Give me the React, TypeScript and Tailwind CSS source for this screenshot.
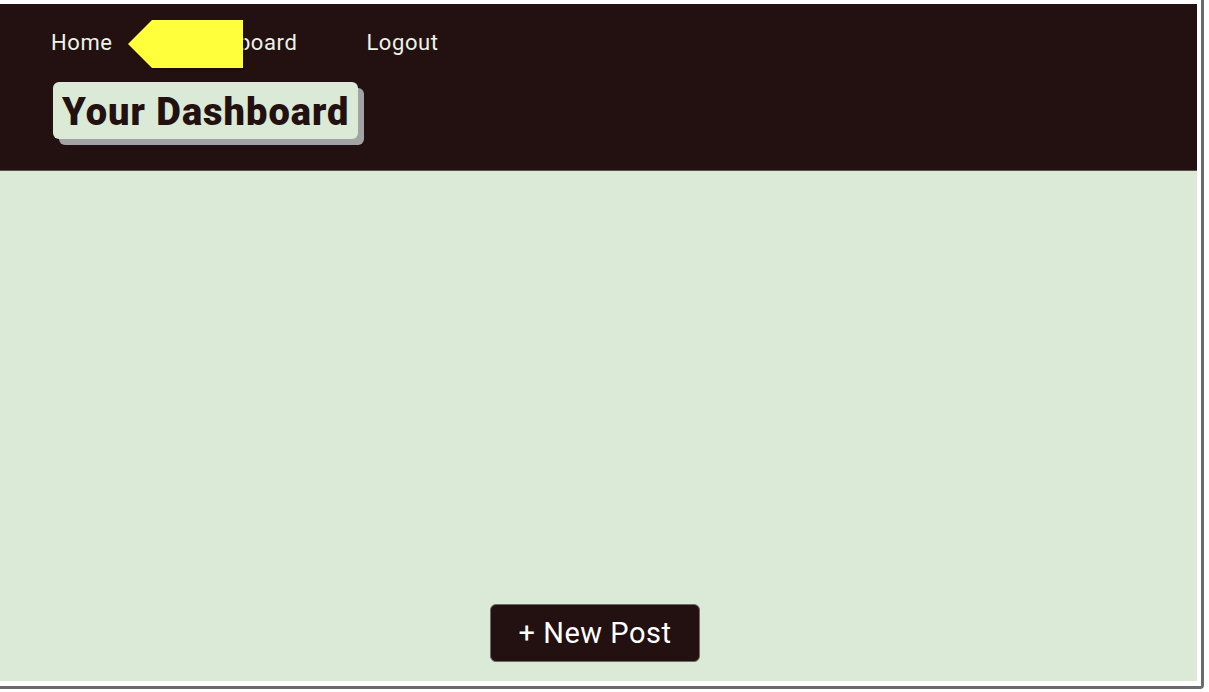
const navLinks = [
  { label: "Home", className: "ml-[51px]" },
  { label: "Dashboard", className: "ml-[73px]" },
  { label: "Logout", className: "ml-[69px]" },
];

const App = () => {
  return (
    <div className="w-[1204px] h-[689px] bg-white border-r-[3px] border-b-[3px] border-[#6b6b6b] rounded-br-[4px] pt-1 pr-1 pb-[5px] font-['Roboto',sans-serif]">
      <div className="relative flex flex-col w-[1197px] h-[677px]">
        <header className="bg-[#231010] h-[167px] border-b border-[#5a504c] flex flex-col">
          <nav className="flex flex-row items-center h-[78px] pb-[1px]">
            {navLinks.map((link) => (
              <a
                key={link.label}
                href="#"
                className={`${link.className} text-[22px] tracking-[0.6px] leading-none text-[#ecf3e8]`}
              >
                {link.label}
              </a>
            ))}
          </nav>
          <div className="ml-[53px]">
            <h1 className="inline-block bg-[#dbead6] rounded-[6px] shadow-[6px_6px_0_#a3a3a3] px-[9px] h-[57px] leading-[60px] text-[38px] tracking-[1px] font-black text-[#231010]">
              Your Dashboard
            </h1>
          </div>
        </header>
        <main className="flex-1 bg-[#dbead6] flex flex-col justify-end items-center pb-[19px] pr-[7px]">
          <button className="bg-[#231010] border border-[#6f6a68] rounded-[6px] h-[58px] px-[28px] text-[29px] tracking-[0.5px] leading-none text-white">
            + New Post
          </button>
        </main>
        {/* yellow marker over the nav */}
        <svg
          className="absolute left-[127px] top-[12px]"
          width="120"
          height="56"
          viewBox="0 0 120 56"
        >
          <polygon points="26,5 118,5 118,54 26,54 2,30" fill="#1a0a0a" opacity="0.6" />
          <polygon points="25,4 116,4 116,52 25,52 1,28" fill="#ffff3b" />
        </svg>
      </div>
    </div>
  );
};

export default App;
